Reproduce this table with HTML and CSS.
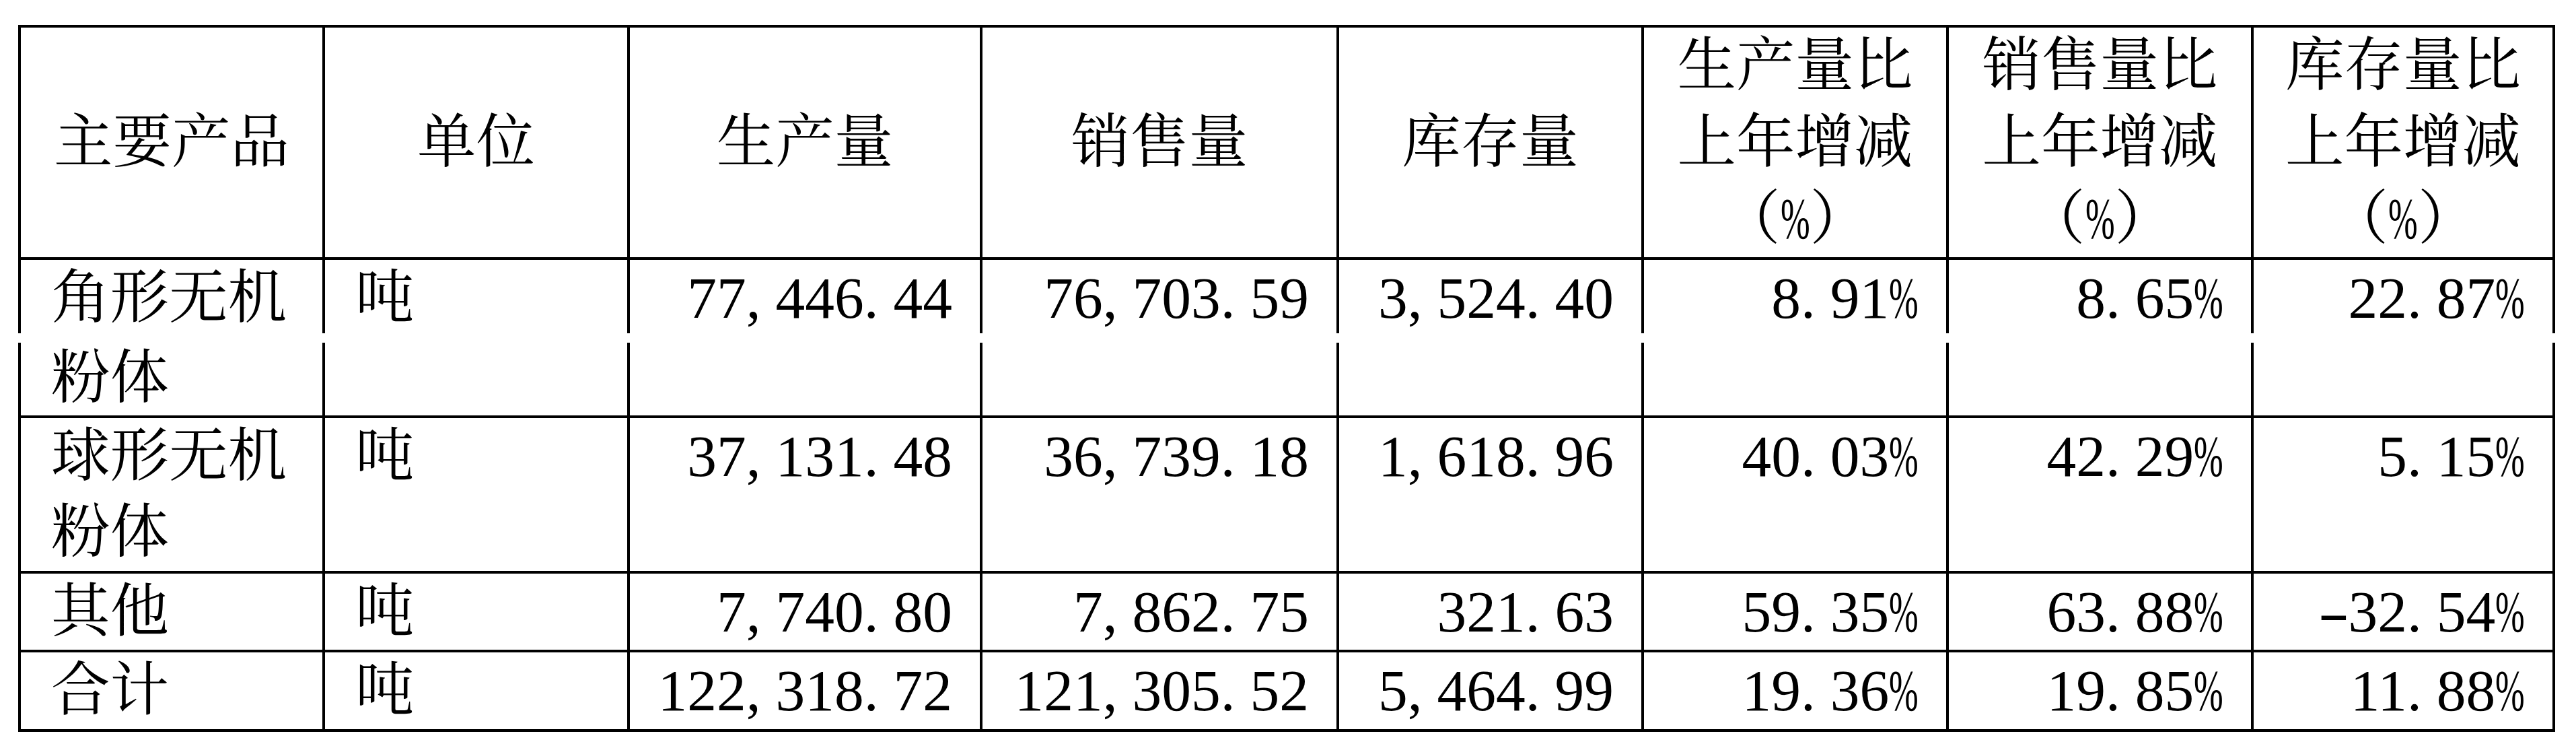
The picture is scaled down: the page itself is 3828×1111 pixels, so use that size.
FILE: index.html
```html
<!DOCTYPE html>
<html lang="zh-CN">
<head>
<meta charset="utf-8">
<title>主要产品产销存</title>
<link rel="stylesheet" href="styles.css">
</head>
<body>
<div class="page">
  <table class="sheet sheet-top">
    <colgroup>
      <col class="c-prod"><col class="c-unit"><col class="c-make"><col class="c-sell"><col class="c-stock"><col class="c-r1"><col class="c-r2"><col class="c-r3">
    </colgroup>
    <thead>
      <tr class="head">
        <th>主要产品</th>
        <th>单位</th>
        <th>生产量</th>
        <th>销售量</th>
        <th>库存量</th>
        <th>生产量比<br>上年增减<br>（<span class="pc">%</span>）</th>
        <th>销售量比<br>上年增减<br>（<span class="pc">%</span>）</th>
        <th>库存量比<br>上年增减<br>（<span class="pc">%</span>）</th>
      </tr>
    </thead>
    <tbody>
      <tr class="split-a">
        <td>角形无机</td>
        <td>吨</td>
        <td class="num">77<span class="p">,</span>446<span class="p">.</span>44</td>
        <td class="num">76<span class="p">,</span>703<span class="p">.</span>59</td>
        <td class="num">3<span class="p">,</span>524<span class="p">.</span>40</td>
        <td class="num">8<span class="p">.</span>91<span class="pc">%</span></td>
        <td class="num">8<span class="p">.</span>65<span class="pc">%</span></td>
        <td class="num">22<span class="p">.</span>87<span class="pc">%</span></td>
      </tr>
    </tbody>
  </table>
  <table class="sheet sheet-bottom">
    <colgroup>
      <col class="c-prod"><col class="c-unit"><col class="c-make"><col class="c-sell"><col class="c-stock"><col class="c-r1"><col class="c-r2"><col class="c-r3">
    </colgroup>
    <tbody>
      <tr class="split-b">
        <td>粉体</td>
        <td></td><td></td><td></td><td></td><td></td><td></td><td></td>
      </tr>
      <tr>
        <td>球形无机粉体</td>
        <td>吨</td>
        <td class="num">37<span class="p">,</span>131<span class="p">.</span>48</td>
        <td class="num">36<span class="p">,</span>739<span class="p">.</span>18</td>
        <td class="num">1<span class="p">,</span>618<span class="p">.</span>96</td>
        <td class="num">40<span class="p">.</span>03<span class="pc">%</span></td>
        <td class="num">42<span class="p">.</span>29<span class="pc">%</span></td>
        <td class="num">5<span class="p">.</span>15<span class="pc">%</span></td>
      </tr>
      <tr>
        <td>其他</td>
        <td>吨</td>
        <td class="num">7<span class="p">,</span>740<span class="p">.</span>80</td>
        <td class="num">7<span class="p">,</span>862<span class="p">.</span>75</td>
        <td class="num">321<span class="p">.</span>63</td>
        <td class="num">59<span class="p">.</span>35<span class="pc">%</span></td>
        <td class="num">63<span class="p">.</span>88<span class="pc">%</span></td>
        <td class="num"><span class="minus">-</span>32<span class="p">.</span>54<span class="pc">%</span></td>
      </tr>
      <tr>
        <td>合计</td>
        <td>吨</td>
        <td class="num">122<span class="p">,</span>318<span class="p">.</span>72</td>
        <td class="num">121<span class="p">,</span>305<span class="p">.</span>52</td>
        <td class="num">5<span class="p">,</span>464<span class="p">.</span>99</td>
        <td class="num">19<span class="p">.</span>36<span class="pc">%</span></td>
        <td class="num">19<span class="p">.</span>85<span class="pc">%</span></td>
        <td class="num">11<span class="p">.</span>88<span class="pc">%</span></td>
      </tr>
    </tbody>
  </table>
</div>
</body>
</html>
```

FILE: styles.css
```css
html, body {
  margin: 0;
  padding: 0;
  background: #ffffff;
}

body {
  width: 3828px;
  height: 1111px;
  overflow: hidden;
  color: #000000;
  font-family: "Liberation Serif", "Noto Serif CJK SC", "Noto Sans CJK SC", serif;
  font-size: 87.5px;
}

.page {
  padding: 37px 0 0 27px;
}

.sheet {
  border-collapse: collapse;
  table-layout: fixed;
  width: 3766px;
}

.c-prod { width: 452px; }
.c-unit { width: 453px; }
.c-make { width: 524px; }
.c-sell { width: 530px; }
.c-stock { width: 453px; }
.c-r1 { width: 453px; }
.c-r2 { width: 453px; }
.c-r3 { width: 448px; }

.sheet th,
.sheet td {
  border: 4px solid #000000;
  padding: 0 41px 0 45px;
  line-height: 113.5px;
  font-weight: normal;
  text-align: left;
  vertical-align: top;
}

.sheet th {
  padding: 0 43px;
  text-align: center;
  vertical-align: middle;
}

.sheet .num {
  padding-left: 0;
  text-align: right;
  white-space: nowrap;
}

.split-a td {
  border-bottom: 0;
  padding-top: 4px;
  line-height: 105px;
}

.sheet-bottom {
  margin-top: 14px;
}

.split-b td {
  border-top: 0;
  padding-bottom: 2px;
  line-height: 106px;
}

.p {
  display: inline-block;
  width: 0.5em;
  text-align: left;
}

.pc {
  display: inline-block;
  width: 0.5em;
  transform: scaleX(0.6);
  transform-origin: 0 50%;
}

.minus {
  display: inline-block;
  width: 0.5em;
  text-align: center;
  transform: scaleX(1.6);
}
```
